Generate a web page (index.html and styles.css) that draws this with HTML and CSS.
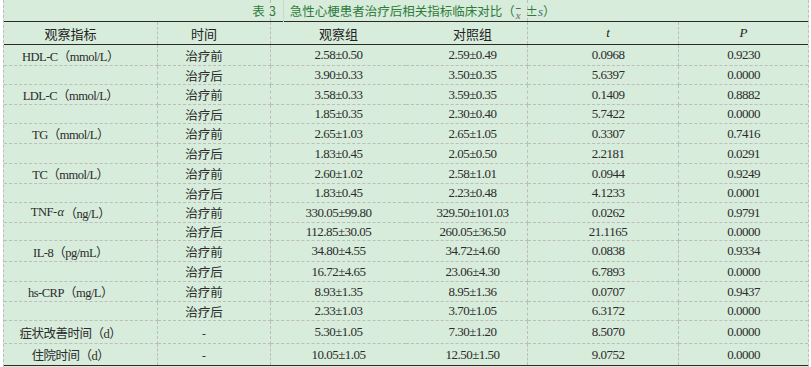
FILE: index.html
```html
<!DOCTYPE html>
<html lang="zh-CN">
<head>
<meta charset="utf-8">
<title>表3 急性心梗患者治疗后相关指标临床对比</title>
<link rel="stylesheet" href="styles.css">
</head>
<body>
<div class="table">
  <div class="caption">
    <p class="cap-text"><span class="cap-no">表<span class="cap-n">3</span></span><span class="cap-title">急性心梗患者治疗后相关指标临床对比（<span class="xbar">x</span> ±<i class="s">s</i>）</span></p>
  </div>
  <div class="grid head">
    <div class="c c1">观察指标</div>
    <div class="c c2">时间</div>
    <div class="c c3">观察组</div>
    <div class="c c4">对照组</div>
    <div class="c c5"><i class="it">t</i></div>
    <div class="c c6"><i class="it">P</i></div>
  </div>
  <div class="grid body">
    <div class="c c1 lab">HDL-C（mmol/L）</div><div class="c c2">治疗前</div><div class="c c3 num">2.58±0.50</div><div class="c c4 num">2.59±0.49</div><div class="c c5 num">0.0968</div><div class="c c6 num">0.9230</div>
    <div class="c c1 lab"></div><div class="c c2">治疗后</div><div class="c c3 num">3.90±0.33</div><div class="c c4 num">3.50±0.35</div><div class="c c5 num">5.6397</div><div class="c c6 num">0.0000</div>
    <div class="c c1 lab">LDL-C（mmol/L）</div><div class="c c2">治疗前</div><div class="c c3 num">3.58±0.33</div><div class="c c4 num">3.59±0.35</div><div class="c c5 num">0.1409</div><div class="c c6 num">0.8882</div>
    <div class="c c1 lab"></div><div class="c c2">治疗后</div><div class="c c3 num">1.85±0.35</div><div class="c c4 num">2.30±0.40</div><div class="c c5 num">5.7422</div><div class="c c6 num">0.0000</div>
    <div class="c c1 lab">TG（mmol/L）</div><div class="c c2">治疗前</div><div class="c c3 num">2.65±1.03</div><div class="c c4 num">2.65±1.05</div><div class="c c5 num">0.3307</div><div class="c c6 num">0.7416</div>
    <div class="c c1 lab"></div><div class="c c2">治疗后</div><div class="c c3 num">1.83±0.45</div><div class="c c4 num">2.05±0.50</div><div class="c c5 num">2.2181</div><div class="c c6 num">0.0291</div>
    <div class="c c1 lab">TC（mmol/L）</div><div class="c c2">治疗前</div><div class="c c3 num">2.60±1.02</div><div class="c c4 num">2.58±1.01</div><div class="c c5 num">0.0944</div><div class="c c6 num">0.9249</div>
    <div class="c c1 lab"></div><div class="c c2">治疗后</div><div class="c c3 num">1.83±0.45</div><div class="c c4 num">2.23±0.48</div><div class="c c5 num">4.1233</div><div class="c c6 num">0.0001</div>
    <div class="c c1 lab">TNF-<i class="alpha">α</i>（ng/L）</div><div class="c c2">治疗前</div><div class="c c3 num">330.05±99.80</div><div class="c c4 num">329.50±101.03</div><div class="c c5 num">0.0262</div><div class="c c6 num">0.9791</div>
    <div class="c c1 lab"></div><div class="c c2">治疗后</div><div class="c c3 num">112.85±30.05</div><div class="c c4 num">260.05±36.50</div><div class="c c5 num">21.1165</div><div class="c c6 num">0.0000</div>
    <div class="c c1 lab">IL-8（pg/mL）</div><div class="c c2">治疗前</div><div class="c c3 num">34.80±4.55</div><div class="c c4 num">34.72±4.60</div><div class="c c5 num">0.0838</div><div class="c c6 num">0.9334</div>
    <div class="c c1 lab"></div><div class="c c2">治疗后</div><div class="c c3 num">16.72±4.65</div><div class="c c4 num">23.06±4.30</div><div class="c c5 num">6.7893</div><div class="c c6 num">0.0000</div>
    <div class="c c1 lab">hs-CRP（mg/L）</div><div class="c c2">治疗前</div><div class="c c3 num">8.93±1.35</div><div class="c c4 num">8.95±1.36</div><div class="c c5 num">0.0707</div><div class="c c6 num">0.9437</div>
    <div class="c c1 lab"></div><div class="c c2">治疗后</div><div class="c c3 num">2.33±1.03</div><div class="c c4 num">3.70±1.05</div><div class="c c5 num">6.3172</div><div class="c c6 num">0.0000</div>
    <div class="c c1 lab">症状改善时间（d）</div><div class="c c2">-</div><div class="c c3 num">5.30±1.05</div><div class="c c4 num">7.30±1.20</div><div class="c c5 num">8.5070</div><div class="c c6 num">0.0000</div>
    <div class="c c1 lab">住院时间（d）</div><div class="c c2">-</div><div class="c c3 num">10.05±1.05</div><div class="c c4 num">12.50±1.50</div><div class="c c5 num">9.0752</div><div class="c c6 num">0.0000</div>
  </div>
</div>
</body>
</html>
```
FILE: styles.css
```css
html, body {
  margin: 0;
  padding: 0;
  background: #ffffff;
}

body {
  font-family: "Liberation Serif", "Noto Sans CJK SC", serif;
  font-size: 13px;
  color: #2b2b2b;
}

.table {
  margin-left: 3px;
  width: 806px;
  height: 367px;
  box-sizing: border-box;
  background: #d7ecdb;
  border-left: 1px dashed #bdbdbd;
  border-right: 1px dashed #bdbdbd;
}

.caption {
  height: 22px;
  box-sizing: border-box;
  border-bottom: 1px solid #2a2a2a;
  display: flex;
  justify-content: center;
  align-items: center;
  background-image:
    repeating-linear-gradient(to bottom, #bdbdbd 0 3px, transparent 3px 6px),
    repeating-linear-gradient(to bottom, #bdbdbd 0 3px, transparent 3px 6px);
  background-size: 1px 100%, 1px 100%;
  background-position: 266px 0, 523px 0;
  background-repeat: no-repeat;
}

.cap-text {
  margin: 0;
  display: flex;
  align-items: center;
  font-family: "Noto Sans CJK SC", sans-serif;
  font-size: 12.5px;
  line-height: 21px;
  color: #2f7b3b;
  padding-right: 4px;
}

.cap-no {
  padding-right: 7px;
}

.cap-n {
  margin-left: 4px;
}

.cap-title {
  border-left: 1px solid #c3dcc8;
  padding-left: 6px;
}

.xbar {
  display: inline-block;
  font-family: "Liberation Serif", serif;
  font-style: italic;
  font-size: 11px;
  line-height: 11px;
  color: #666;
  text-decoration: overline;
  vertical-align: -3px;
  margin: 0 2px 0 1px;
}

.s {
  font-family: "Liberation Serif", serif;
  font-size: 13px;
  color: #3b6f73;
}

.grid {
  display: grid;
  grid-template-columns: 154px 113px 135px 122px 151px 1fr;
}

.head {
  height: 23px;
  box-sizing: border-box;
  border-bottom: 1px solid #2a2a2a;
}

.head .c {
  font-family: "Noto Sans CJK SC", sans-serif;
  font-size: 13px;
  color: #222;
}

.it {
  font-family: "Liberation Serif", serif;
  font-size: 13px;
}

.body {
  grid-template-rows: 21px 19px 20px 19px 20px 20px 20px 19px 20px 18px 21px 20px 20px 19px 23px 21px;
  border-bottom: 1px solid #2a2a2a;
}

.c {
  display: flex;
  align-items: center;
  justify-content: center;
  box-sizing: border-box;
  white-space: nowrap;
  font-family: "Noto Sans CJK SC", sans-serif;
  font-size: 12.5px;
  color: #2b2b2b;
}

.body .c {
  border-bottom: 1px dashed #bdbdbd;
}

.body .c:nth-last-child(-n+6) {
  border-bottom: none;
}

.c1, .c2 {
  border-right: 1px dashed #bdbdbd;
  padding-right: 20px;
}

.c4 {
  border-right: 1px dashed #bdbdbd;
  padding-left: 12px;
}

.c5 {
  border-right: 1px dashed #bdbdbd;
  padding-left: 10px;
}

.num, .lab {
  font-family: "Liberation Serif", "Noto Sans CJK SC", serif;
  font-size: 13px;
  letter-spacing: -0.5px;
}

.lab {
  font-size: 12.5px;
}

.alpha {
  margin: 0 1px;
}
```
